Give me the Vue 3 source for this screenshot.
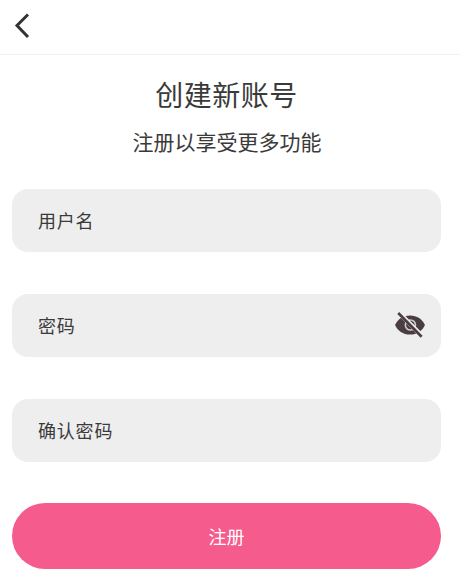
<script setup>
const fields = [
  { label: '用户名', eye: false },
  { label: '密码', eye: true },
  { label: '确认密码', eye: false },
]
</script>

<template>
  <div class="page">
    <header class="bar">
      <svg class="back" width="18" height="28" viewBox="0 0 18 28">
        <path d="M15 2.500 L4 13.500 L15 25" fill="none" stroke="#333" stroke-width="3" />
      </svg>
    </header>
    <h1 class="title">创建新账号</h1>
    <p class="sub">注册以享受更多功能</p>
    <div class="form">
      <div v-for="f in fields" :key="f.label" class="field">
        <span>{{ f.label }}</span>
        <svg v-if="f.eye" class="eye" width="32" height="32" viewBox="0 0 24 24">
          <path fill="#4a3d42" d="M12 4.800C6.800 4.800 2.600 7.600 .8 12c1.800 4.400 6 7.200 11.200 7.200s9.400-2.800 11.200-7.200C21.400 7.600 17.200 4.800 12 4.800z" />
          <circle cx="12.300" cy="12" r="3.800" fill="none" stroke="#cfc9cb" stroke-width="1.200" />
          <path d="M3.600 2.600 L21.100 20.400" stroke="#eee" stroke-width="3.400" />
          <path d="M3.200 3 L20.700 20.800" stroke="#4a3d42" stroke-width="2" />
        </svg>
      </div>
      <button class="submit">注册</button>
    </div>
  </div>
</template>

<style scoped>
.page {
  width: 460px;
  height: 585px;
  background: #fff;
  font-family: "Noto Sans CJK SC", "Noto Sans", sans-serif;
  color: #3a3a3a;
  overflow: hidden;
}
.bar {
  height: 55px;
  box-sizing: border-box;
  border-bottom: 1px solid #f2f2f2;
  padding: 12px 0 0 13px;
}
.back { display: block; }
.title {
  margin: 14px 7px 0 0;
  font-size: 28px;
  line-height: 50px;
  font-weight: 400;
  text-align: center;
  letter-spacing: 0.5px;
}
.sub {
  margin: 4px 6px 0 0;
  font-size: 21px;
  line-height: 36px;
  text-align: center;
}
.form {
  margin-top: 30px;
  padding: 0 19px 0 12px;
  display: flex;
  flex-direction: column;
  gap: 42px;
}
.field {
  height: 63px;
  box-sizing: border-box;
  background: #eee;
  border-radius: 16px;
  padding: 0 15px 2px 26px;
  display: flex;
  align-items: center;
  justify-content: space-between;
  font-size: 18px;
  letter-spacing: 0.8px;
}
.eye { margin-right: 0; }
.submit {
  height: 66px;
  margin-top: -1px;
  border: none;
  border-radius: 33px;
  background: #f55b8d;
  color: #fff;
  font-family: inherit;
  font-size: 18px;
  padding: 0;
}
</style>
